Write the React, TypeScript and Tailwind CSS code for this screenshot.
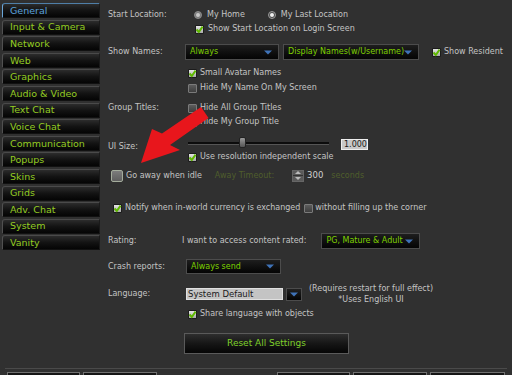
import React from "react";

const tabs = [
  "General",
  "Input & Camera",
  "Network",
  "Web",
  "Graphics",
  "Audio & Video",
  "Text Chat",
  "Voice Chat",
  "Communication",
  "Popups",
  "Skins",
  "Grids",
  "Adv. Chat",
  "System",
  "Vanity",
];

const Check = ({ checked = false }: { checked?: boolean }) => (
  <span
    className={
      "relative inline-block w-[9px] h-[9px] shrink-0 rounded-[1px] border " +
      (checked
        ? "border-[#1c1c1c] bg-gradient-to-b from-[#e6e6e6] to-[#a9a9a9]"
        : "border-[#7a7a7a] bg-gradient-to-b from-[#5c5c5c] to-[#3e3e3e]")
    }
  >
    {checked && (
      <svg viewBox="0 0 9 9" className="absolute -left-px -top-px w-[9px] h-[9px]">
        <path d="M1.5 4.5 L3.8 7 L7.6 1.6" fill="none" stroke="#5fb800" strokeWidth="2" />
      </svg>
    )}
  </span>
);

const Radio = ({ on = false }: { on?: boolean }) => (
  <span
    className={
      "flex items-center justify-center w-[8px] h-[8px] rounded-full border shrink-0 " +
      (on ? "border-[#9a9a9a] bg-[#4a4a4a]" : "border-[#8a8a8a] bg-[#7a7a7a]")
    }
  >
    <span className={"w-[4px] h-[4px] rounded-full " + (on ? "bg-[#f0f0f0]" : "bg-[#c8c8c8]")} />
  </span>
);

const Arrow = () => (
  <svg viewBox="0 0 8 5" className="w-[8px] h-[5px] shrink-0">
    <path d="M0 0.5 H8 L4 4.5 Z" fill="#3f73b8" />
  </svg>
);

const Dropdown = ({ text, w }: { text: string; w: string }) => (
  <div
    className={
      w +
      " h-[16px] flex items-center justify-between pl-[4px] pr-[6px] border border-[#4c4c4c] bg-gradient-to-b from-[#1e1e1e] to-[#050505] text-[#7ed000] whitespace-nowrap"
    }
  >
    <span>{text}</span>
    <Arrow />
  </div>
);

const Label = ({ children }: { children: React.ReactNode }) => (
  <span className="w-[77px] shrink-0 text-[#c4c4c4]">{children}</span>
);

export default function App() {
  return (
    <div className="relative w-[512px] h-[375px] overflow-hidden bg-[#303030] font-['DejaVu_Sans',sans-serif] text-[8px] text-[#c4c4c4] leading-none">
      <div className="flex">
        {/* tab column */}
        <div className="w-[100px] pl-[2px] pt-[3px] flex flex-col gap-[1.6px] shrink-0">
          {tabs.map((t, i) => (
            <div
              key={t}
              className={
                "h-[15px] flex items-center pl-[7px] text-[9.5px] rounded-tl-[3px] border-t border-l border-r border-b bg-gradient-to-b from-[#2c2c2c] via-[#131313] to-[#050505] " +
                (i === 0
                  ? "border-l-[#6aa6d8] border-t-[#4f7fa8] border-r-[#1a1a1a] border-b-[#111] text-[#5aa2dc]"
                  : "border-l-[#505050] border-t-[#4a4a4a] border-r-[#1a1a1a] border-b-[#111] text-[#94cc22]")
              }
            >
              {t}
            </div>
          ))}
        </div>

        {/* settings */}
        <div className="flex-1 pl-[8px] pt-[9px] flex flex-col">
          <div className="h-[12px] flex items-center">
            <Label>Start Location:</Label>
            <span className="ml-[9px] flex items-center gap-[5px]">
              <Radio />
              <span>My Home</span>
            </span>
            <span className="ml-[23px] flex items-center gap-[5px]">
              <Radio on />
              <span>My Last Location</span>
            </span>
          </div>
          <div className="mt-[2px] h-[12px] flex items-center pl-[87px] gap-[4px]">
            <Check checked />
            <span>Show Start Location on Login Screen</span>
          </div>

          <div className="mt-[9px] h-[16px] flex items-center">
            <Label>Show Names:</Label>
            <Dropdown text="Always" w="w-[94px]" />
            <div className="ml-[4px]">
              <Dropdown text="Display Names(w/Username)" w="w-[136px]" />
            </div>
            <span className="ml-[13px] flex items-center gap-[3px]">
              <Check checked />
              <span>Show Resident</span>
            </span>
          </div>

          <div className="mt-[7px] h-[12px] flex items-center pl-[80px] gap-[3px]">
            <Check checked />
            <span>Small Avatar Names</span>
          </div>
          <div className="mt-[3px] h-[12px] flex items-center pl-[80px] gap-[3px]">
            <Check />
            <span>Hide My Name On My Screen</span>
          </div>

          <div className="mt-[8px] h-[12px] flex items-center">
            <Label>Group Titles:</Label>
            <span className="ml-[3px] flex items-center gap-[3px]">
              <Check />
              <span>Hide All Group Titles</span>
            </span>
          </div>
          <div className="mt-[2px] h-[12px] flex items-center pl-[80px] gap-[3px]">
            <Check />
            <span>Hide My Group Title</span>
          </div>

          <div className="mt-[9px] h-[14px] flex items-start">
            <span className="w-[80px] shrink-0 pt-[6px]">UI Size:</span>
            <div className="relative w-[141px] h-[12px] flex items-center">
              <div className="w-full h-[3px] bg-[#0c0c0c] border-b border-[#555]" />
              <div className="absolute left-[51px] top-0 w-[7px] h-[11px] rounded-[2px] border border-[#222] bg-gradient-to-b from-[#9a9a9a] to-[#555]" />
            </div>
            <div className="ml-[12px] mt-[2px] w-[27px] h-[11px] bg-[#c8c8c8] border border-[#eee] text-[#1a1a1a] flex items-center pl-[2px]">
              1.000
            </div>
          </div>
          <div className="h-[12px] flex items-center pl-[80px] gap-[3px]">
            <Check checked />
            <span>Use resolution independent scale</span>
          </div>

          <div className="mt-[6px] h-[13px] flex items-center pl-[3px]">
            <span className="w-[12px] h-[12px] shrink-0 rounded-[2px] border border-[#a4ac9c] bg-gradient-to-b from-[#7c7c7c] to-[#5e5e5e]" />
            <span className="ml-[3px]">Go away when idle</span>
            <span className="ml-[13px] text-[#4f5e2c]">Away Timeout:</span>
            <span className="ml-[18px] w-[12px] h-[12px] shrink-0 flex flex-col border border-[#666] bg-[#5a5a5a]">
              <span className="flex-1 flex items-center justify-center border-b border-[#333]">
                <svg viewBox="0 0 6 3" className="w-[6px] h-[3px]">
                  <path d="M0 3 L3 0 L6 3 Z" fill="#bbb" />
                </svg>
              </span>
              <span className="flex-1 flex items-center justify-center">
                <svg viewBox="0 0 6 3" className="w-[6px] h-[3px]">
                  <path d="M0 0 L3 3 L6 0 Z" fill="#bbb" />
                </svg>
              </span>
            </span>
            <span className="ml-[3px] text-[8.5px] text-[#d0d0d0]">300</span>
            <span className="ml-[8px] text-[#4f5e2c]">seconds</span>
          </div>

          <div className="mt-[20px] h-[12px] flex items-center pl-[5px] gap-[3px]">
            <Check checked />
            <span>Notify when in-world currency is exchanged</span>
            <span className="ml-[1px] flex items-center gap-[2px]">
              <Check />
              <span>without filling up the corner</span>
            </span>
          </div>

          <div className="mt-[19px] h-[16px] flex items-center">
            <span className="w-[74px] shrink-0">Rating:</span>
            <span>I want to access content rated:</span>
            <div className="ml-[15px]">
              <Dropdown text="PG, Mature & Adult" w="w-[99px]" />
            </div>
          </div>

          <div className="mt-[10px] h-[15px] flex items-center">
            <span className="w-[78px] shrink-0">Crash reports:</span>
            <Dropdown text="Always send" w="w-[95px] !h-[15px]" />
          </div>

          <div className="mt-[12px] h-[16px] flex items-center">
            <span className="w-[78px] shrink-0">Language:</span>
            <div className="w-[97px] h-[12px] bg-[#c4c4c4] border border-[#e0e0e0] text-[#1a1a1a] flex items-center pl-[1px] text-[8.5px]">
              System Default
            </div>
            <div className="ml-[3px] w-[16px] h-[13px] border border-[#4c4c4c] bg-gradient-to-b from-[#222] to-[#050505] flex items-center justify-center">
              <Arrow />
            </div>
            <div className="ml-[7px] flex flex-col items-center leading-[11px]">
              <span>(Requires restart for full effect)</span>
              <span>*Uses English UI</span>
            </div>
          </div>

          <div className="mt-[6px] h-[12px] flex items-center pl-[80px] gap-[3px]">
            <Check checked />
            <span>Share language with objects</span>
          </div>

          <div className="mt-[13px] ml-[76px] w-[165px] h-[21px] border border-[#5a5a5a] bg-gradient-to-b from-[#2e2e2e] via-[#161616] to-[#060606] flex items-center justify-center text-[#7fd12a] text-[9px]">
            Reset All Settings
          </div>
        </div>
      </div>

      {/* bottom strip */}
      <div className="absolute left-0 top-[368px] w-[512px]">
        <div className="mx-[5px] h-px bg-[#4a4a4a]" />
        <div className="flex mt-[3px] pl-[7px]">
          <div className="w-[73px] h-[8px] border-t border-x border-[#707070] bg-[#151515]" />
          <div className="ml-[3px] w-[74px] h-[8px] border-t border-x border-[#707070] bg-[#151515]" />
          <div className="ml-[120px] w-[73px] h-[8px] border-t border-x border-[#707070] bg-[#151515]" />
          <div className="ml-[3px] w-[74px] h-[8px] border-t border-x border-[#707070] bg-[#151515]" />
          <div className="ml-[3px] w-[75px] h-[8px] border-t border-x border-[#707070] bg-[#151515]" />
        </div>
      </div>

      {/* red annotation arrow */}
      <svg className="absolute left-0 top-0 w-[512px] h-[375px] pointer-events-none" viewBox="0 0 512 375">
        <polygon
          points="141,163 152,129 162,133.5 201,107 208.5,118 170,145 180,150"
          fill="#e8161c"
        />
      </svg>
    </div>
  );
}
